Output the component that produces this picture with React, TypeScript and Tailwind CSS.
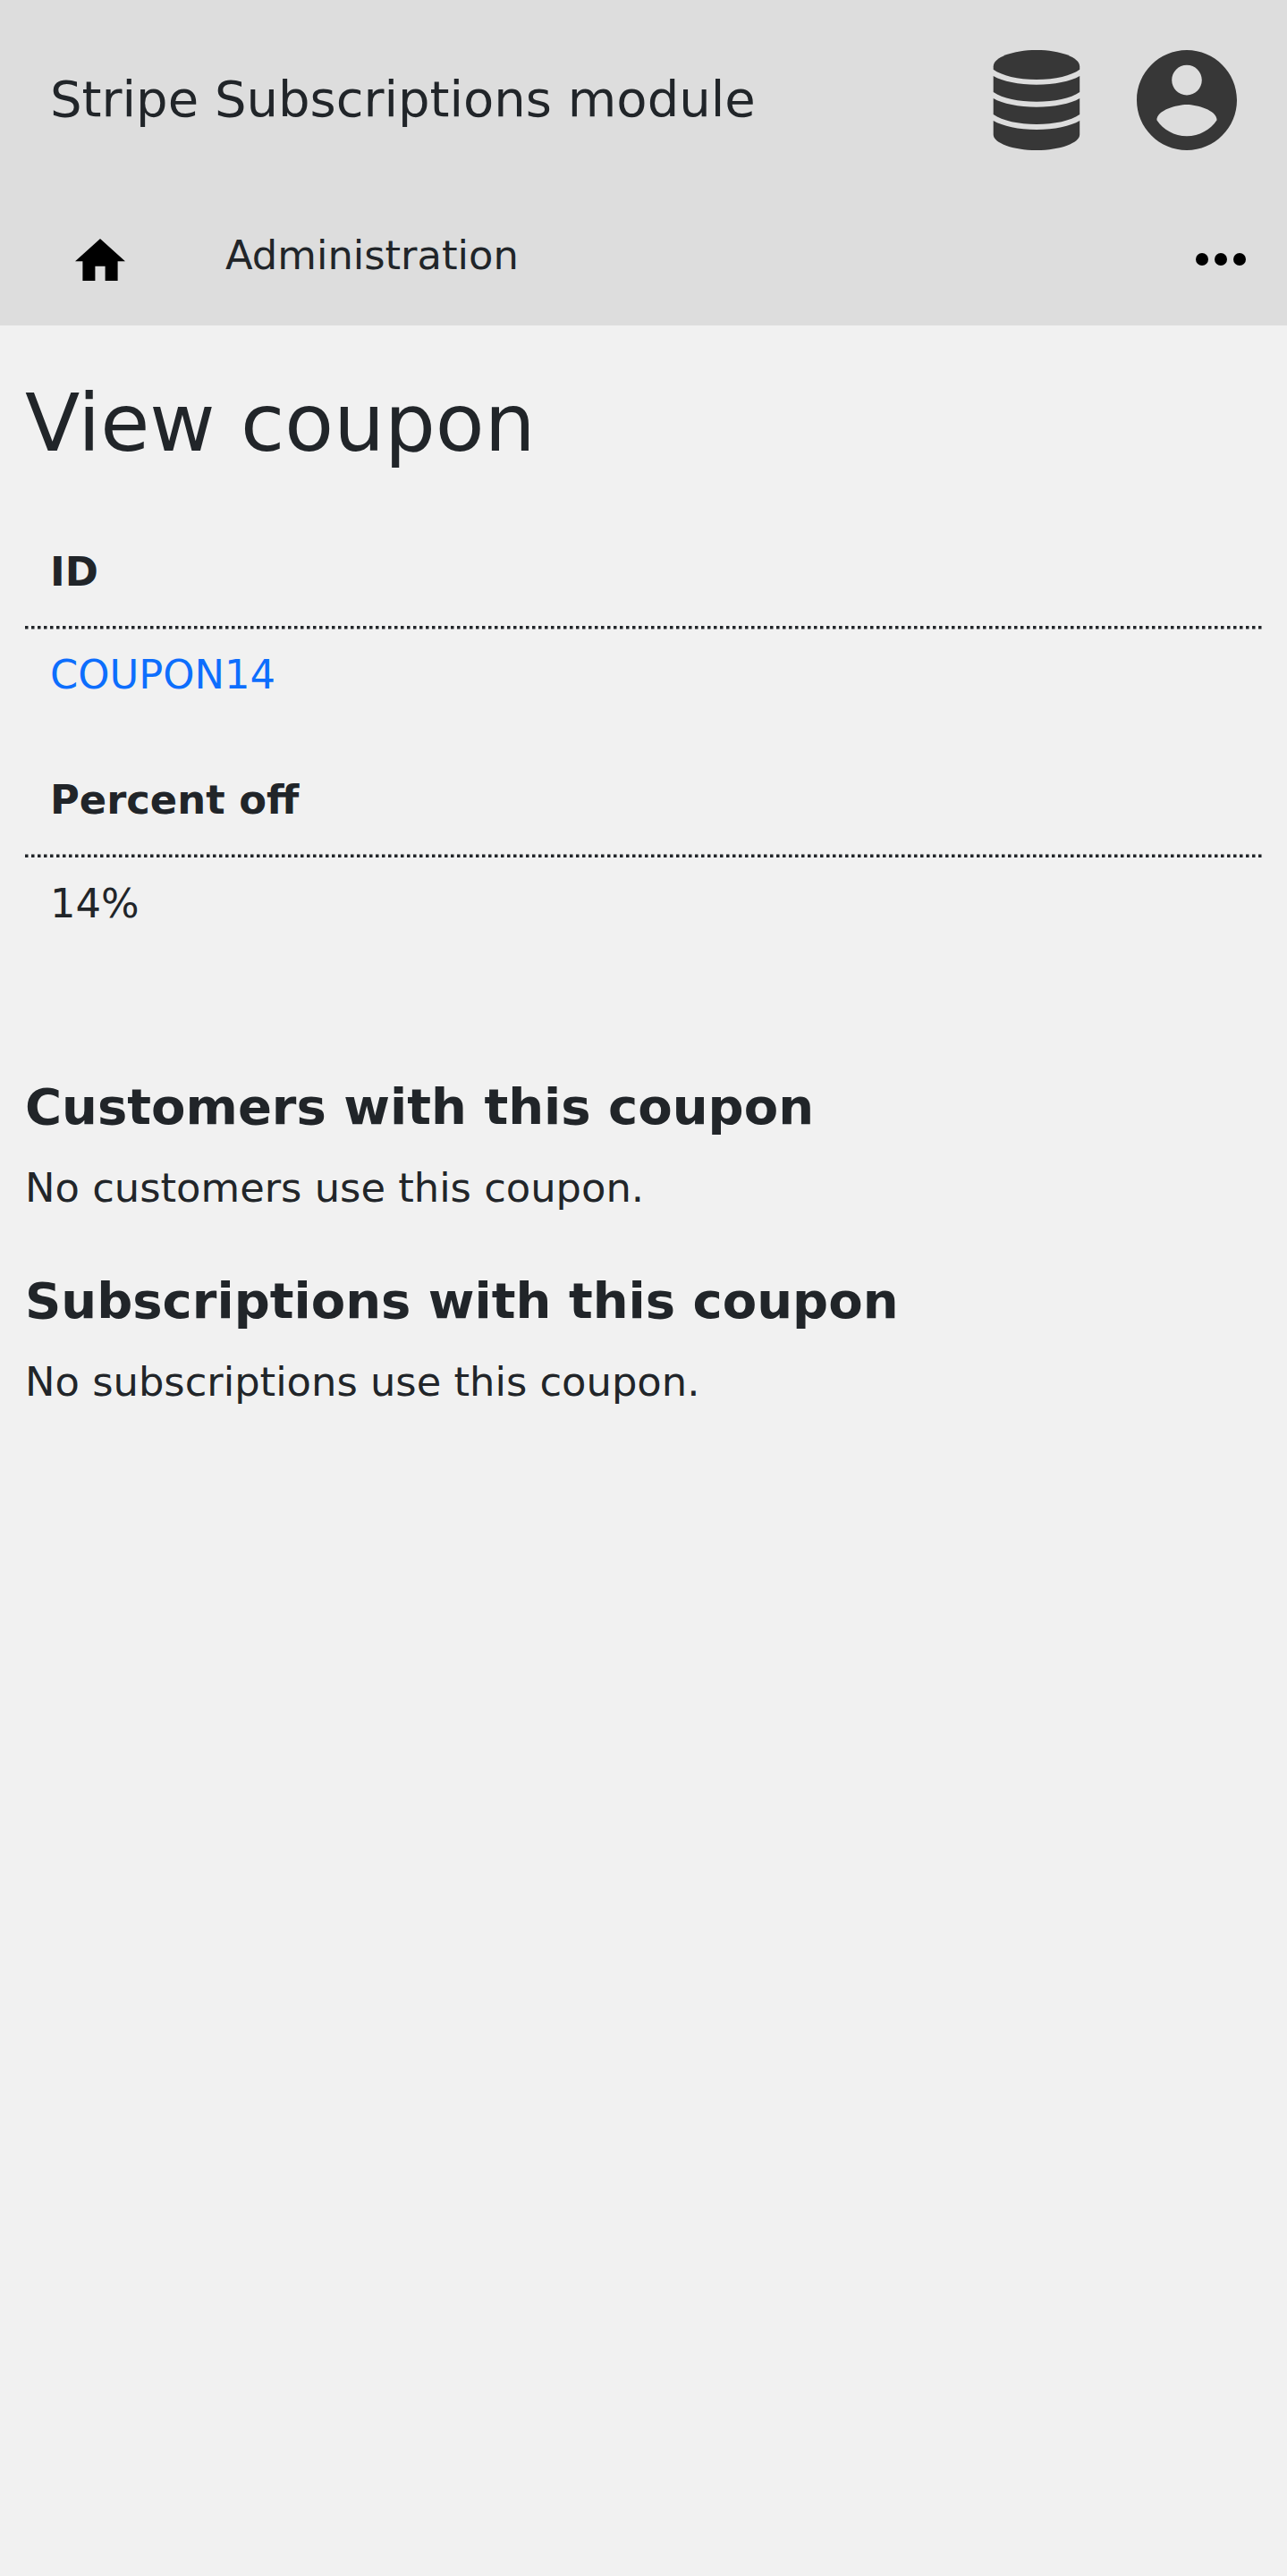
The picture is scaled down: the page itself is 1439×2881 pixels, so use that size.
import React from "react";

function DottedRule({ offset }: { offset: number }) {
  return (
    <svg className="-mt-px block h-[5px] w-[1383px]" viewBox="0 0 1383 5" fill="none">
      <line x1="0" x2="1383" y1={offset} y2={offset} stroke="#212529" strokeWidth="3.4" strokeDasharray="3.5 3.5" />
    </svg>
  );
}

function Field({ label, ruleOffset, children }: { label: string; ruleOffset: number; children: React.ReactNode }) {
  return (
    <div className="h-[255.7px] text-[44.8px] leading-[67px]">
      <div className="h-[94.3px] pl-7 font-bold">{label}</div>
      <DottedRule offset={ruleOffset} />
      <div className="pl-7 pt-[17px]">{children}</div>
    </div>
  );
}

export default function App() {
  return (
    <div className="min-h-[2881px] bg-[#f1f1f1] text-[#212529] font-['DejaVu_Sans',sans-serif]">
      <header className="h-[364px] bg-[#dddddd]">
        <div className="flex h-[224px] items-start justify-between pl-14 pr-[56.5px]">
          <div className="pt-[69px] text-[56px] leading-[83px]">Stripe Subscriptions module</div>
          <div className="flex gap-14 pt-[55.8px]">
            <svg className="h-28 w-28" viewBox="0 0 112 112" fill="#373737">
              <path d="M7.700 18.300C7.700 8.200 29.300 0 56 0S104.200 8.200 104.200 18.300V21.800C95 28.600 77 33 56 33S17 28.600 7.700 21.800Z" />
              <path d="M7.700 29C18 35 36 38.700 56 38.700S94 35 104.200 29V47C94 54 76 57.800 56 57.800S18 54 7.700 47Z" />
              <path d="M7.700 54C18 60 36 63.700 56 63.700S94 60 104.200 54V72C94 79 76 83 56 83S18 79 7.700 72Z" />
              <path d="M7.700 79C18 85 36 89 56 89S94 85 104.200 79V94.500C104.200 103.800 82.700 112 56 112S7.700 103.800 7.700 94.500Z" />
            </svg>
            <svg className="h-28 w-28" viewBox="2 2 20 20" fill="#373737"><path d="M12 2C6.480 2 2 6.480 2 12s4.480 10 10 10 10-4.480 10-10S17.520 2 12 2zm0 3c1.660 0 3 1.340 3 3s-1.340 3-3 3-3-1.340-3-3 1.340-3 3-3zm0 14.200c-2.500 0-4.710-1.280-6-3.220.03-1.990 4-3.080 6-3.080 1.990 0 5.970 1.090 6 3.080-1.290 1.940-3.500 3.220-6 3.220z" /></svg>
          </div>
        </div>
        <div className="flex h-[140px] text-[44.8px] leading-[67px]">
          <svg className="ml-[84px] mt-[42.5px] h-[47.6px] w-[56px]" viewBox="2 3 20 17"><path d="M10 20v-6h4v6h5v-8h3L12 3 2 12h3v8z" /></svg>
          <div className="ml-28 mt-[28px]">Administration</div>
          <svg className="ml-auto mr-[46px] mt-[59.3px] h-[14px] w-[56px]" viewBox="0 0 56 14">
            <circle cx="7" cy="7" r="7" />
            <circle cx="28" cy="7" r="7" />
            <circle cx="49" cy="7" r="7" />
          </svg>
        </div>
      </header>
      <main className="px-7">
        <h1 className="pt-[55px] text-[89.6px] leading-[108px]">View coupon</h1>
        <div className="pt-[78.6px]">
          <Field label="ID" ruleOffset={2.7}><span className="text-[#0d6efd]">COUPON14</span></Field>
          <Field label="Percent off" ruleOffset={2.3}>14%</Field>
        </div>
        <h2 className="mt-[87px] text-[56px] font-bold leading-[67px]">Customers with this coupon</h2>
        <p className="mt-[24px] text-[44.8px] leading-[67px]">No customers use this coupon.</p>
        <h2 className="mt-[59px] text-[56px] font-bold leading-[67px]">Subscriptions with this coupon</h2>
        <p className="mt-[24px] text-[44.8px] leading-[67px]">No subscriptions use this coupon.</p>
      </main>
    </div>
  );
}
